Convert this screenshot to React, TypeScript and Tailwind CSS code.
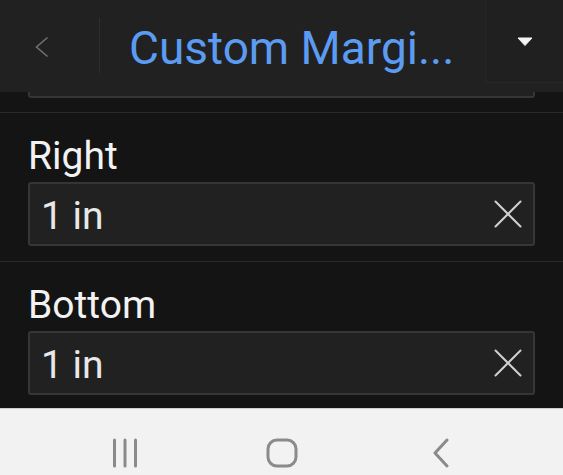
const font = { fontFamily: "Roboto, 'Noto Sans', sans-serif" };

// ─── Clear icon ───────────────────────────────────────────────────────────────
const ClearIcon = () => (
  <svg width="28" height="28" viewBox="0 0 28 28">
    <g stroke="#d0d0d0" strokeWidth="2" strokeLinecap="round">
      <line x1="1.5" y1="1.5" x2="26.5" y2="26.5" />
      <line x1="26.5" y1="1.5" x2="1.5" y2="26.5" />
    </g>
  </svg>
);

// ─── Field row ────────────────────────────────────────────────────────────────
const MarginField = ({ label, value, last = false }: { label: string; value: string; last?: boolean }) => (
  <div className={`pt-[21px] pb-[15px] ${last ? "" : "border-b border-[#2a2a2a]"}`}>
    <div className="px-[28px]">
      <p className="text-[39px] leading-[44px] text-[#f2f2f2]">{label}</p>
      <div className="mt-[4px] h-[64px] flex items-center justify-between rounded-[3px] border-2 border-[#363636] bg-[#212121] pl-[11px] pr-[11px]">
        <span className="text-[39px] leading-none pt-[5px] text-[#e8e8e8]">{value}</span>
        <ClearIcon />
      </div>
    </div>
  </div>
);

export default function App() {
  return (
    <div className="h-[475px] w-[563px] flex flex-col bg-[#141414] overflow-hidden" style={font}>
      {/* Header */}
      <header className="h-[92px] shrink-0 flex bg-[#212121]">
        <div className="w-[99px] shrink-0 flex items-center justify-center">
          <svg width="14" height="22" viewBox="0 0 14 22" className="ml-[-15px] mt-[2px]">
            <polyline points="12.5,1.5 1.5,11 12.5,20.5" fill="none" stroke="#707070" strokeWidth="1.6" />
          </svg>
        </div>
        <div className="w-px h-[55px] mt-[18px] bg-[#2e2e2e]" />
        <div className="flex-1 flex items-center pl-[29px]">
          <h1 className="text-[46px] leading-none mt-[4px] text-[#5b9cf2] whitespace-nowrap">Custom Margi...</h1>
        </div>
        <div className="w-[78px] h-[83px] shrink-0 flex items-start justify-center pt-[37px] bg-[#202020] border-l border-b border-[#272727]">
          <svg width="16" height="9" viewBox="0 0 16 9">
            <path d="M1 1 L15 1 L8 8.5 Z" fill="#f5f5f5" stroke="#f5f5f5" strokeWidth="1" strokeLinejoin="round" />
          </svg>
        </div>
      </header>

      {/* Content */}
      <main className="flex-1 overflow-hidden">
        <div className="pb-[14px] border-b border-[#2a2a2a]">
          <div className="mx-[28px] h-[6px] rounded-b-[3px] border-2 border-t-0 border-[#363636] bg-[#212121]" />
        </div>
        <MarginField label="Right" value="1 in" />
        <MarginField label="Bottom" value="1 in" last />
      </main>

      {/* System nav bar */}
      <nav className="h-[67px] shrink-0 flex items-start pt-[29px] pl-[111px] bg-[#f2f2f2] border-t border-[#cfcfcf]">
        <svg width="28" height="30" viewBox="0 0 28 30">
          <g stroke="#8a8a8a" strokeWidth="3" strokeLinecap="round">
            <line x1="3.5" y1="2" x2="3.5" y2="28" />
            <line x1="14" y1="2" x2="14" y2="28" />
            <line x1="24.5" y1="2" x2="24.5" y2="28" />
          </g>
        </svg>
        <svg width="32" height="30" viewBox="0 0 32 30" className="ml-[127px]">
          <rect x="2" y="2" width="28" height="26" rx="9" fill="none" stroke="#8a8a8a" strokeWidth="3" />
        </svg>
        <svg width="20" height="30" viewBox="0 0 20 30" className="ml-[133px]">
          <polyline points="16,2 4,15 16,28" fill="none" stroke="#8a8a8a" strokeWidth="3" strokeLinecap="round" strokeLinejoin="round" />
        </svg>
      </nav>
    </div>
  );
}
